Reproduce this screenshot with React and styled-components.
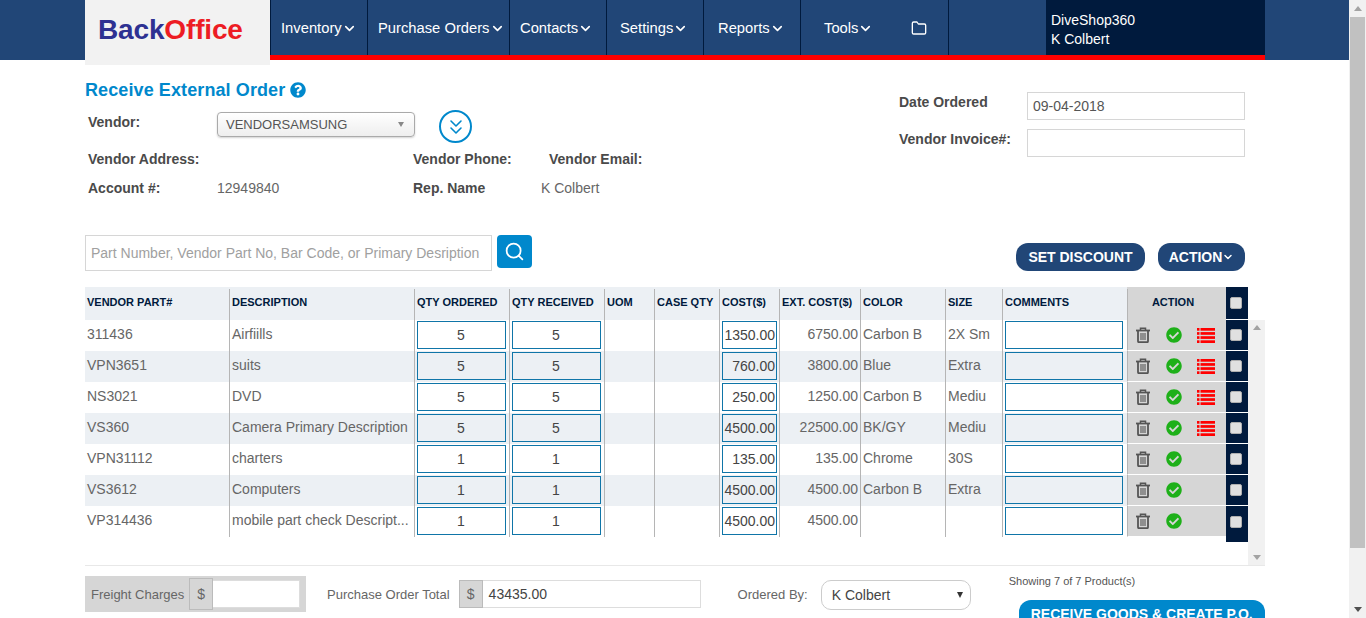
import React from 'react'
import styled, { createGlobalStyle } from 'styled-components'
import { FaCheckCircle, FaQuestionCircle } from 'react-icons/fa'
import { FiChevronDown, FiChevronsDown, FiFolder, FiSearch } from 'react-icons/fi'

const Global = createGlobalStyle`
  html, body { margin: 0; padding: 0; overflow: hidden; }
  body { font-family: "Liberation Sans", Arial, sans-serif; font-size: 14px; color: #555; background: #fff; }
  * { box-sizing: border-box; }
`
const Shell = styled.div`
  display: flex;
  width: 1366px;
  height: 618px;
  overflow: hidden;
`
const Page = styled.div`
  width: 1349px;
  flex: none;
`
const Scrollbar = styled.div`
  width: 17px;
  flex: none;
  background: #f1f1f1;
  display: flex;
  flex-direction: column;
  justify-content: space-between;
  align-items: center;
  padding: 6px 0;
  position: relative;
`
const ScrollThumb = styled.div`
  position: absolute;
  left: 1px;
  top: 17px;
  width: 15px;
  height: 531px;
  background: #c1c1c1;
`
const Arrow = styled.div`
  width: 0;
  height: 0;
  border-left: 4px solid transparent;
  border-right: 4px solid transparent;
  ${p => p.$down ? 'border-top: 5px solid #505050;' : 'border-bottom: 5px solid #a3a3a3;'}
`
const Header = styled.header`
  height: 60px;
  background: #214677;
  padding-left: 85px;
  display: flex;
`
const Logo = styled.div`
  width: 185px;
  height: 65px;
  flex: none;
  background: #f2f2f2;
  z-index: 2;
  padding: 13px 0 0 13px;
  font-size: 28px;
  font-weight: 700;
  line-height: 34px;
  color: #2e3192;
  letter-spacing: -0.15px;
  span { color: #ed1c24; }
`
const NavBar = styled.nav`
  width: 995px;
  height: 60px;
  display: flex;
  border-bottom: 5px solid #ff0000;
`
const NavItem = styled.div`
  width: ${p => p.$w}px;
  flex: none;
  border-left: ${p => p.$plain ? 0 : 1}px solid #001a3d;
  color: #fff;
  font-size: 14.75px;
  display: flex;
  align-items: center;
  padding-left: ${p => p.$pad || 10}px;
  padding-top: 1px;
  svg {
    font-size: ${p => p.$icon || 15}px;
    stroke-width: ${p => p.$icon ? 2 : 2.6};
    flex: none;
  }
`
const UserBox = styled.div`
  margin-left: auto;
  width: 219px;
  background: #001a3d;
  color: #fff;
  font-size: 14px;
  line-height: 19px;
  padding: 11px 0 0 5px;
`
const Body = styled.main`
  padding: 0 84px 0 85px;
`
const TopArea = styled.section`
  width: 1160px;
  height: 175px;
  display: flex;
  justify-content: space-between;
`
const TopLeft = styled.div`
  width: 720px;
`
const Title = styled.h1`
  margin: 19px 0 0;
  font-size: 18px;
  line-height: 22px;
  font-weight: 700;
  color: #0088cc;
  display: flex;
  align-items: center;
  gap: 5px;
  letter-spacing: 0.1px;
  svg { font-size: 16px; }
`
const InfoGrid = styled.div`
  display: grid;
  grid-template-columns: 129px 196px 136px 1fr;
  padding-left: 3px;
  font-size: 14px;
`
const VendorRow = styled.div`
  grid-column: 1 / -1;
  display: flex;
  height: 40px;
  margin-top: 9px;
`
const Label = styled.div`
  font-weight: 700;
  color: #4a4a4a;
  font-size: 14px;
  padding-top: ${p => p.$top || 0}px;
  width: ${p => p.$w ? `${p.$w}px` : 'auto'};
`
const InfoRow = styled.div`
  display: contents;
`
const VendorSelect = styled.div`
  width: 198px;
  height: 25px;
  margin-top: 2px;
  border: 1px solid #aaa;
  border-radius: 4px;
  background: linear-gradient(#fff, #eee);
  box-shadow: 0 1px 2px rgba(0, 0, 0, 0.18);
  padding: 0 8px 0 8px;
  display: flex;
  align-items: center;
  justify-content: space-between;
  color: #555;
  font-size: 13px;
`
const SelectCaret = styled.i`
  width: 0;
  height: 0;
  border-left: 3.5px solid transparent;
  border-right: 3.5px solid transparent;
  border-top: 5px solid #888;
  margin-right: 2px;
`
const ExpandBtn = styled.div`
  width: 33px;
  height: 33px;
  margin-left: 24px;
  border: 2px solid #0088cc;
  border-radius: 50%;
  color: #0088cc;
  display: flex;
  align-items: center;
  justify-content: center;
  font-size: 24px;
  svg { stroke-width: 1.6; }
`
const Cell = styled.div`
  height: 29px;
  line-height: 18px;
  margin-left: ${p => p.$shift || 0}px;
  color: ${p => p.$label ? '#4a4a4a' : '#666'};
  font-weight: ${p => p.$label ? 700 : 400};
`
const DateArea = styled.div`
  width: 346px;
  padding-top: 32px;
  display: flex;
  flex-direction: column;
  gap: 9px;
`
const DateRow = styled.div`
  display: flex;
  justify-content: space-between;
`
const DateField = styled.div`
  width: 218px;
  height: 28px;
  border: 1px solid #d6d6d6;
  padding-left: 5px;
  line-height: 27px;
  color: #555;
`
const SearchBar = styled.div`
  width: 1160px;
  height: 52px;
  display: flex;
  align-items: flex-start;
`
const SearchField = styled.div`
  width: 407px;
  height: 36px;
  border: 1px solid #d6d6d6;
  padding-left: 5px;
  line-height: 34px;
  color: #a0a0a0;
  font-size: 14px;
`
const SearchBtn = styled.div`
  width: 35px;
  height: 33px;
  margin-left: 5px;
  background: #0088cc;
  border-radius: 4px;
  color: #fff;
  display: flex;
  align-items: center;
  justify-content: center;
  font-size: 21px;
`
const BarButtons = styled.div`
  margin-left: auto;
  margin-top: 8px;
  display: flex;
  gap: 13px;
`
const PillBtn = styled.div`
  width: ${p => p.$w}px;
  height: 28px;
  background: #214677;
  border-radius: 12px;
  color: #fff;
  font-weight: 700;
  font-size: 14px;
  display: flex;
  align-items: center;
  justify-content: center;
  svg { font-size: 12px; stroke-width: 3; }
`
const COLUMNS = '144px 185px 95px 95px 50px 65px 60px 81px 85px 57px 125px 99px 22px'
const Row = styled.div`
  display: grid;
  grid-template-columns: ${COLUMNS};
  height: ${p => p.$head ? 34 : 31}px;
  background: ${p => p.$alt || p.$head ? '#ecf0f4' : '#fff'};
  width: 1163px;
`
const HeadCell = styled.div`
  display: flex;
  align-items: center;
  padding: 0 ${p => p.$action ? 7 : 0}px 4px ${p => p.$first ? 2 : p.$action ? 0 : 3}px;
  justify-content: ${p => p.$action ? 'center' : 'flex-start'};
  font-size: 11px;
  font-weight: 700;
  color: #001a3d;
  white-space: nowrap;
  position: relative;
  background: ${p => p.$action ? '#d6d6d6' : 'transparent'};
  &:not(:first-child)::before {
    content: '';
    position: absolute;
    left: 0;
    top: 2px;
    bottom: 0;
    width: 1px;
    background: #b5b5b5;
  }
`
const DataCell = styled.div`
  display: flex;
  align-items: center;
  justify-content: ${p => p.$right ? 'flex-end' : 'flex-start'};
  padding: 0 ${p => p.$right ? 2 : 0}px 3px 2px;
  color: #666;
  font-size: 14px;
  white-space: nowrap;
  overflow: hidden;
  border-left: ${p => p.$first ? 0 : 1}px solid #b5b5b5;
`
const TableWrap = styled.div`
  width: 1180px;
  display: flex;
  flex-direction: column;
  height: 279px;
  border-bottom: 1px solid #e8e8e8;
`
const TableRows = styled.div`
  display: flex;
`
const TableTrack = styled.div`
  width: 17px;
  height: 245px;
  background: #f1f1f1;
  display: flex;
  flex-direction: column;
  align-items: center;
  justify-content: space-between;
  padding: 5px 0;
`
const TrackArrow = styled.div`
  width: 0;
  height: 0;
  border-left: 4px solid transparent;
  border-right: 4px solid transparent;
  ${p => p.$down ? 'border-top: 5px solid #a3a3a3;' : 'border-bottom: 5px solid #a3a3a3;'}
`
const QtyBox = styled.div`
  width: ${p => p.$w}px;
  height: 28px;
  border: 1px solid #0f75a8;
  background: ${p => p.$alt ? '#ecf0f4' : '#fff'};
  color: #444;
  display: flex;
  align-items: center;
  justify-content: ${p => p.$right ? 'flex-end' : 'center'};
  padding-right: 1px;
  flex: none;
`
const InputCell = styled.div`
  display: flex;
  align-items: center;
  padding-left: 2px;
  border-left: 1px solid #b5b5b5;
  padding-bottom: 1px;
`
const ActionCell = styled.div`
  background: #d6d6d6;
  border-left: 1px solid #b5b5b5;
  border-bottom: 1px solid #fff;
  display: flex;
  align-items: center;
  padding-left: 8px;
  gap: 15px;
`
const CheckCol = styled.div`
  background: #001a3d;
  display: flex;
  align-items: center;
  padding-left: 4px;
  border-bottom: ${p => p.$lined ? '1px solid #fff' : 0};
`
const CheckBox = styled.i`
  display: block;
  width: 12px;
  height: 12px;
  border-radius: 2px;
  background: #e0e0e0;
  border: 1px solid #b0b0b0;
`
const TailCheck = styled.div`
  width: 1163px;
  display: flex;
  justify-content: flex-end;
`
const TailBlock = styled.div`
  width: 22px;
  height: 5px;
  background: #001a3d;
`
const Footer = styled.footer`
  display: flex;
  align-items: flex-start;
  padding-top: 10px;
  font-size: 13px;
`
const FreightGroup = styled.div`
  width: 221px;
  height: 36px;
  background: #d6d6d6;
  display: flex;
  align-items: center;
  padding-left: 6px;
  color: #666;
  white-space: nowrap;
  flex: none;
`
const Dollar = styled.div`
  width: 24px;
  height: ${p => p.$h}px;
  flex: none;
  border: 1px solid #bbb;
  background: #d6d6d6;
  color: #666;
  font-size: 14px;
  display: flex;
  align-items: center;
  justify-content: center;
  margin-left: ${p => p.$gap || 0}px;
`
const Field = styled.div`
  width: ${p => p.$w}px;
  height: ${p => p.$h}px;
  background: #fff;
  border: 1px solid #ddd;
  border-left: 0;
  padding-left: 6px;
  color: #444;
  font-size: 14px;
  line-height: 26px;
  flex: none;
`
const TotalGroup = styled.div`
  display: flex;
  align-items: center;
  margin: 4px 0 0 21px;
  color: #666;
  flex: none;
`
const OrderedBy = styled.div`
  display: flex;
  align-items: center;
  margin: 4px 0 0 37px;
  color: #666;
  flex: none;
`
const OrderLabel = styled.span`
  padding-bottom: 2px;
`
const OrderSelect = styled.div`
  width: 150px;
  height: 30px;
  margin-left: 13px;
  border: 1px solid #ccc;
  border-radius: 10px;
  display: flex;
  align-items: center;
  justify-content: space-between;
  padding: 0 7px 0 10px;
  color: #444;
  font-size: 14px;
`
const DarkCaret = styled.i`
  width: 0;
  height: 0;
  border-left: 3.5px solid transparent;
  border-right: 3.5px solid transparent;
  border-top: 6px solid #333;
`
const FooterRight = styled.div`
  margin-left: 38px;
  margin-top: -2px;
  width: 256px;
`
const Showing = styled.div`
  font-size: 11px;
  line-height: 14px;
  color: #555;
`
const ReceiveBtn = styled.div`
  margin: 12px 0 0 10px;
  width: 246px;
  height: 40px;
  background: #0088cc;
  border-radius: 12px;
  color: #fff;
  font-weight: 700;
  font-size: 14px;
  line-height: 29px;
  text-align: center;
`
const OkIcon = styled(FaCheckCircle)`
  color: #1eb019;
  font-size: 16px;
  flex: none;
  margin-left: 1px;
`
const IconSvg = styled.svg`
  display: block;
  flex: none;
`

const TrashIcon = () => (
  <IconSvg width="14" height="16" viewBox="0 0 14 16" fill="none" stroke="#555">
    <path d="M0 3.5h14" strokeWidth="1.8" />
    <path d="M4.5 3V1.2h5V3" strokeWidth="1.5" />
    <path d="M2 4v10.2c0 .6.4 1 1 1h8c.6 0 1-.4 1-1V4" strokeWidth="1.8" />
    <path d="M5 6v7M7 6v7M9 6v7" strokeWidth="1.1" />
  </IconSvg>
)

// four rows, each a small square and a long bar
const ListIcon = () => (
  <IconSvg width="18" height="15" viewBox="0 0 18 15" fill="#ff0000">
    {[0, 4.1, 8.2, 12.3].map(y => (
      <g key={y}>
        <rect x="0" y={y} width="2.5" height="2.7" />
        <rect x="3.5" y={y} width="14.5" height="2.7" />
      </g>
    ))}
  </IconSvg>
)

const products = [
  ['311436', 'Airfiills', '5', '1350.00', '6750.00', 'Carbon B', '2X Sm', true],
  ['VPN3651', 'suits', '5', '760.00', '3800.00', 'Blue', 'Extra', true],
  ['NS3021', 'DVD', '5', '250.00', '1250.00', 'Carbon B', 'Mediu', true],
  ['VS360', 'Camera Primary Description', '5', '4500.00', '22500.00', 'BK/GY', 'Mediu', true],
  ['VPN31112', 'charters', '1', '135.00', '135.00', 'Chrome', '30S', false],
  ['VS3612', 'Computers', '1', '4500.00', '4500.00', 'Carbon B', 'Extra', false],
  ['VP314436', 'mobile part check Descript...', '1', '4500.00', '4500.00', '', '', false]
]
const heads = ['VENDOR PART#', 'DESCRIPTION', 'QTY ORDERED', 'QTY RECEIVED', 'UOM', 'CASE QTY', 'COST($)', 'EXT. COST($)', 'COLOR', 'SIZE', 'COMMENTS']

export default function App () {
  return (
    <Shell>
      <Global />
      <Page>
        <Header>
          <Logo>Back<span>Office</span></Logo>
          <NavBar>
            <NavItem $w={97}>Inventory <FiChevronDown /></NavItem>
            <NavItem $w={142}>Purchase Orders <FiChevronDown /></NavItem>
            <NavItem $w={97}>Contacts <FiChevronDown /></NavItem>
            <NavItem $w={97} $pad={13}>Settings <FiChevronDown /></NavItem>
            <NavItem $w={97} $pad={14}>Reports <FiChevronDown /></NavItem>
            <NavItem $w={88} $pad={23}>Tools <FiChevronDown /></NavItem>
            <NavItem $w={60} $pad={23} $plain $icon={16}><FiFolder /></NavItem>
            <NavItem $w={98} />
            <UserBox>DiveShop360<br />K Colbert</UserBox>
          </NavBar>
        </Header>
        <Body>
          <TopArea>
            <TopLeft>
              <Title>Receive External Order <FaQuestionCircle /></Title>
              <InfoGrid>
                <VendorRow>
                  <Label $w={129} $top={4}>Vendor:</Label>
                  <VendorSelect>VENDORSAMSUNG<SelectCaret /></VendorSelect>
                  <ExpandBtn><FiChevronsDown /></ExpandBtn>
                </VendorRow>
                <InfoRow>
                  <Cell $label>Vendor Address:</Cell>
                  <Cell />
                  <Cell $label>Vendor Phone:</Cell>
                  <Cell $label>Vendor Email:</Cell>
                </InfoRow>
                <InfoRow>
                  <Cell $label>Account #:</Cell>
                  <Cell>12949840</Cell>
                  <Cell $label>Rep. Name</Cell>
                  <Cell $shift={-8}>K Colbert</Cell>
                </InfoRow>
              </InfoGrid>
            </TopLeft>
            <DateArea>
              <DateRow>
                <Label $top={2}>Date Ordered</Label>
                <DateField>09-04-2018</DateField>
              </DateRow>
              <DateRow>
                <Label $top={2}>Vendor Invoice#:</Label>
                <DateField />
              </DateRow>
            </DateArea>
          </TopArea>
          <SearchBar>
            <SearchField>Part Number, Vendor Part No, Bar Code, or Primary Desription</SearchField>
            <SearchBtn><FiSearch /></SearchBtn>
            <BarButtons>
              <PillBtn $w={129}>SET DISCOUNT</PillBtn>
              <PillBtn $w={87}>ACTION<FiChevronDown /></PillBtn>
            </BarButtons>
          </SearchBar>
          <TableWrap>
            <Row $head>
              {heads.map((h, i) => <HeadCell key={h} $first={i === 0}>{h}</HeadCell>)}
              <HeadCell $action>ACTION</HeadCell>
              <CheckCol $lined><CheckBox /></CheckCol>
            </Row>
            <TableRows>
              <div>
                {products.map((p, i) => {
                  const alt = i % 2 === 1
                  return (
                    <Row key={p[0]} $alt={alt}>
                      <DataCell $first>{p[0]}</DataCell>
                      <DataCell>{p[1]}</DataCell>
                      <InputCell><QtyBox $w={89} $alt={alt}>{p[2]}</QtyBox></InputCell>
                      <InputCell><QtyBox $w={89} $alt={alt}>{p[2]}</QtyBox></InputCell>
                      <DataCell />
                      <DataCell />
                      <InputCell><QtyBox $w={55} $alt={alt} $right>{p[3]}</QtyBox></InputCell>
                      <DataCell $right>{p[4]}</DataCell>
                      <DataCell>{p[5]}</DataCell>
                      <DataCell>{p[6]}</DataCell>
                      <InputCell><QtyBox $w={118} $alt={alt} /></InputCell>
                      <ActionCell>
                        <TrashIcon />
                        <OkIcon />
                        {p[7] && <ListIcon />}
                      </ActionCell>
                      <CheckCol $lined={i < products.length - 1}><CheckBox /></CheckCol>
                    </Row>
                  )
                })}
                <TailCheck><TailBlock /></TailCheck>
              </div>
              <TableTrack><TrackArrow /><TrackArrow $down /></TableTrack>
            </TableRows>
          </TableWrap>
          <Footer>
            <FreightGroup>
              Freight Charges
              <Dollar $h={32} $gap={5}>$</Dollar>
              <Field $w={87} $h={28} />
            </FreightGroup>
            <TotalGroup>
              Purchase Order Total
              <Dollar $h={28} $gap={9}>$</Dollar>
              <Field $w={218} $h={28}>43435.00</Field>
            </TotalGroup>
            <OrderedBy>
              <OrderLabel>Ordered By:</OrderLabel>
              <OrderSelect>K Colbert<DarkCaret /></OrderSelect>
            </OrderedBy>
            <FooterRight>
              <Showing>Showing 7 of 7 Product(s)</Showing>
              <ReceiveBtn>RECEIVE GOODS &amp; CREATE P.O.</ReceiveBtn>
            </FooterRight>
          </Footer>
        </Body>
      </Page>
      <Scrollbar>
        <Arrow />
        <ScrollThumb />
        <Arrow $down />
      </Scrollbar>
    </Shell>
  )
}
